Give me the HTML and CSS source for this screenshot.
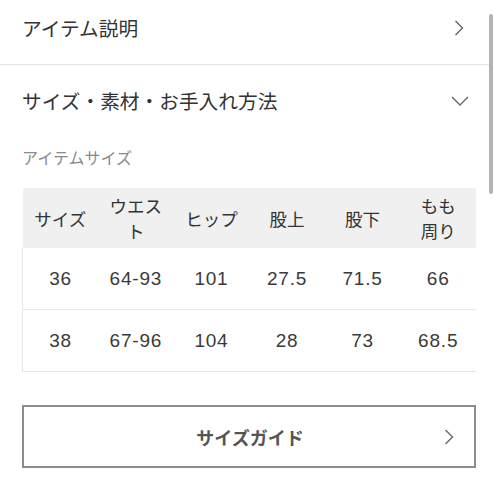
FILE: index.html
```html
<!DOCTYPE html>
<html lang="ja">
<head>
<meta charset="utf-8">
<link rel="stylesheet" href="styles.css">
</head>
<body>
<div class="page">
  <div class="acc acc-closed">
    <span class="acc-title">アイテム説明</span>
    <svg class="chev-r" width="10" height="16" viewBox="0 0 10 16"><polyline points="1.5,1 8.5,8 1.5,15" fill="none" stroke="#666" stroke-width="1.4"/></svg>
  </div>
  <div class="acc acc-open">
    <span class="acc-title">サイズ・素材・お手入れ方法</span>
    <svg class="chev-d" width="18" height="10" viewBox="0 0 18 10"><polyline points="1,1 9,9 17,1" fill="none" stroke="#666" stroke-width="1.4"/></svg>
  </div>
  <div class="body">
    <div class="label">アイテムサイズ</div>
    <table class="sizes">
      <thead>
        <tr><th>サイズ</th><th>ウエス<br>ト</th><th>ヒップ</th><th>股上</th><th>股下</th><th>もも<br>周り</th></tr>
      </thead>
      <tbody>
        <tr><td>36</td><td>64-93</td><td>101</td><td>27.5</td><td>71.5</td><td>66</td></tr>
        <tr><td>38</td><td>67-96</td><td>104</td><td>28</td><td>73</td><td>68.5</td></tr>
      </tbody>
    </table>
    <div class="guide">
      <span class="guide-text">サイズガイド</span>
      <svg class="guide-chev" width="10" height="16" viewBox="0 0 10 16"><polyline points="1.5,1 8.5,8 1.5,15" fill="none" stroke="#666" stroke-width="1.4"/></svg>
    </div>
  </div>
  <div class="scrollbar"></div>
</div>
</body>
</html>
```
FILE: styles.css
```css
html, body {
  margin: 0;
  padding: 0;
  background: #fff;
}
body {
  font-family: "Noto Sans CJK JP", "Noto Sans", sans-serif;
  color: #333;
}
.page {
  position: relative;
  width: 498px;
  height: 498px;
  overflow: hidden;
}
.acc {
  display: flex;
  align-items: center;
  justify-content: space-between;
  padding-left: 22px;
  padding-right: 28px;
  width: 490px;
  box-sizing: border-box;
}
.acc-title {
  font-size: 19.7px;
  line-height: 28px;
}
.acc-closed {
  padding-top: 14px;
  padding-bottom: 22px;
  border-bottom: 1px solid #e2e2e2;
}
.acc-closed .chev-r {
  margin-right: -2px;
}
.acc-open {
  padding-top: 22px;
  padding-bottom: 31px;
  padding-right: 21px;
}
.body {
  padding: 0 22px;
}
.label {
  font-size: 16px;
  line-height: 22px;
  color: #8a8a8a;
}
.sizes {
  margin-top: 20px;
  width: 454px;
  border-collapse: collapse;
  table-layout: fixed;
}
.sizes th {
  background: #f0f0f0;
  font-weight: normal;
  font-size: 17.5px;
  line-height: 25px;
  height: 60px;
  padding: 0;
  text-align: center;
  color: #333;
}
.sizes td {
  font-family: "Liberation Sans", "Noto Sans CJK JP", sans-serif;
  font-size: 19px;
  letter-spacing: 0.8px;
  height: 61px;
  padding: 0;
  text-align: center;
  border-bottom: 1px solid #e6e6e6;
  color: #3a3a3a;
}
.sizes td:first-child {
  border-left: 1px solid #e6e6e6;
}
.guide {
  margin-top: 33px;
  height: 63px;
  border: 2px solid #8c8c8c;
  box-sizing: border-box;
  display: flex;
  align-items: center;
  justify-content: center;
  position: relative;
}
.guide-text {
  font-size: 18px;
  font-weight: bold;
  color: #555;
  margin-left: 2px;
}
.guide-chev {
  position: absolute;
  right: 20px;
  top: 22px;
}
.scrollbar {
  position: absolute;
  left: 489px;
  top: 14px;
  width: 4px;
  height: 180px;
  border-radius: 2px;
  background: #b3b3b3;
}
```
